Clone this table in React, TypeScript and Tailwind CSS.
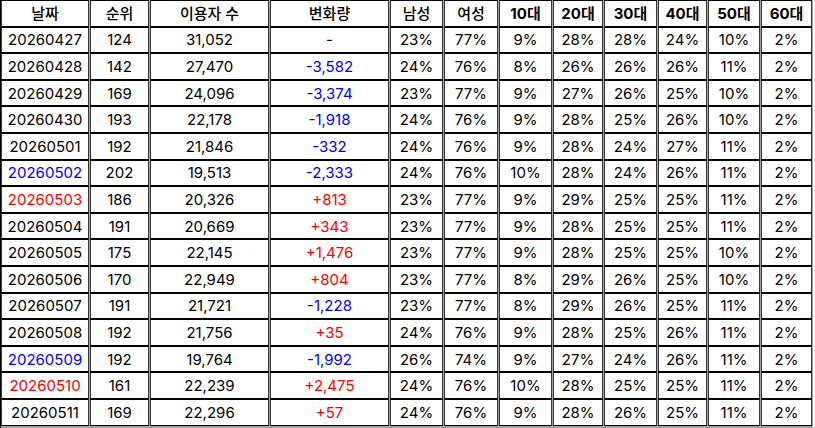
import React from "react";

type Row = {
  d: string;
  dc?: "blue" | "red";
  rank: string;
  users: string;
  delta: string;
  vals: string[];
};

const rows: Row[] = [
  { d: "20260427", rank: "124", users: "31,052", delta: "-", vals: ["23%", "77%", "9%", "28%", "28%", "24%", "10%", "2%"] },
  { d: "20260428", rank: "142", users: "27,470", delta: "-3,582", vals: ["24%", "76%", "8%", "26%", "26%", "26%", "11%", "2%"] },
  { d: "20260429", rank: "169", users: "24,096", delta: "-3,374", vals: ["23%", "77%", "9%", "27%", "26%", "25%", "10%", "2%"] },
  { d: "20260430", rank: "193", users: "22,178", delta: "-1,918", vals: ["24%", "76%", "9%", "28%", "25%", "26%", "10%", "2%"] },
  { d: "20260501", rank: "192", users: "21,846", delta: "-332", vals: ["24%", "76%", "9%", "28%", "24%", "27%", "11%", "2%"] },
  { d: "20260502", dc: "blue", rank: "202", users: "19,513", delta: "-2,333", vals: ["24%", "76%", "10%", "28%", "24%", "26%", "11%", "2%"] },
  { d: "20260503", dc: "red", rank: "186", users: "20,326", delta: "+813", vals: ["23%", "77%", "9%", "29%", "25%", "25%", "11%", "2%"] },
  { d: "20260504", rank: "191", users: "20,669", delta: "+343", vals: ["23%", "77%", "9%", "28%", "25%", "25%", "11%", "2%"] },
  { d: "20260505", rank: "175", users: "22,145", delta: "+1,476", vals: ["23%", "77%", "9%", "28%", "25%", "25%", "10%", "2%"] },
  { d: "20260506", rank: "170", users: "22,949", delta: "+804", vals: ["23%", "77%", "8%", "29%", "26%", "25%", "10%", "2%"] },
  { d: "20260507", rank: "191", users: "21,721", delta: "-1,228", vals: ["23%", "77%", "8%", "29%", "26%", "25%", "11%", "2%"] },
  { d: "20260508", rank: "192", users: "21,756", delta: "+35", vals: ["24%", "76%", "9%", "28%", "25%", "26%", "11%", "2%"] },
  { d: "20260509", dc: "blue", rank: "192", users: "19,764", delta: "-1,992", vals: ["26%", "74%", "9%", "27%", "24%", "26%", "11%", "2%"] },
  { d: "20260510", dc: "red", rank: "161", users: "22,239", delta: "+2,475", vals: ["24%", "76%", "10%", "28%", "25%", "25%", "11%", "2%"] },
  { d: "20260511", rank: "169", users: "22,296", delta: "+57", vals: ["24%", "76%", "9%", "28%", "26%", "25%", "11%", "2%"] },
];

const cell =
  "h-[26.6px] flex items-center justify-center bg-white border-x border-x-[#3a3a3a] border-y border-y-black whitespace-nowrap";

function colorClass(c?: "blue" | "red") {
  if (c === "blue") return "text-[#0000ff]";
  if (c === "red") return "text-[#ff0000]";
  return "text-black";
}

export default function App() {
  const headers = ["날짜", "순위", "이용자 수", "변화량", "남성", "여성"];
  const ages = ["10대", "20대", "30대", "40대", "50대", "60대"];
  return (
    <div
      className="w-[815px] h-[428px] bg-white"
      style={{ fontFamily: "Inter, 'Noto Sans CJK KR', sans-serif" }}
    >
      <div className="w-[813px] bg-[#a0a0a0] pb-[2px] border-l border-l-black">
        <div className="grid grid-cols-[88px_59px_119px_119px_53px_54px_53px_50px_53px_49px_52px_51px] gap-x-px text-[15px] leading-none">
          {headers.map((h) => (
            <div key={h} className={cell + " font-medium text-black"}>
              {h}
            </div>
          ))}
          {ages.map((h) => (
            <div key={h} className={cell + " font-bold text-black"}>
              {h}
            </div>
          ))}
          {rows.map((r) => (
            <React.Fragment key={r.d}>
              <div className={cell + " " + colorClass(r.dc)}>{r.d}</div>
              <div className={cell}>{r.rank}</div>
              <div className={cell}>{r.users}</div>
              <div
                className={
                  cell +
                  " " +
                  (r.delta.startsWith("+")
                    ? "text-[#ff0000]"
                    : r.delta === "-"
                    ? "text-black"
                    : "text-[#0000ff]")
                }
              >
                {r.delta}
              </div>
              {r.vals.map((v, i) => (
                <div key={i} className={cell}>
                  {v}
                </div>
              ))}
            </React.Fragment>
          ))}
        </div>
      </div>
    </div>
  );
}
